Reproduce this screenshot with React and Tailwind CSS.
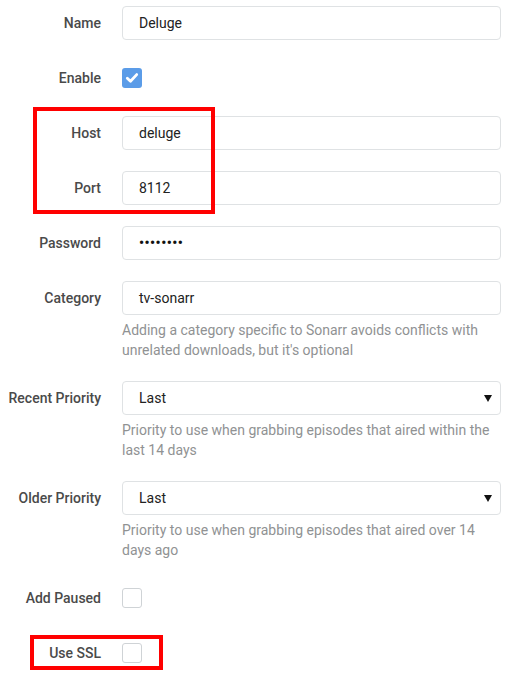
import React from 'react'

const Label = ({ children }) => (
  <div className="h-[34px] flex items-center justify-end text-[14px] font-medium text-[#4a4a4a] whitespace-nowrap">
    {children}
  </div>
)

const TextInput = ({ value, select, secret }) => (
  <div className="relative h-[34px] flex items-center border border-[#dfe2e4] rounded-[4px] bg-white pl-4 pr-3 text-[14px] text-[#222]">
    <span className={secret ? 'font-bold text-[#111] tracking-[0.5px]' : ''}>{value}</span>
    {select && (
      <svg className="absolute right-[8px] top-[13px]" width="8" height="7" viewBox="0 0 8 7">
        <path d="M0 0 H8 L4 7 Z" fill="#111" />
      </svg>
    )}
  </div>
)

const Check = ({ checked }) =>
  checked ? (
    <div className="w-[20px] h-[20px] rounded-[3px] bg-[#5b9ce8] flex items-center justify-center">
      <svg width="14" height="14" viewBox="0 0 14 14">
        <path d="M2.3 7.2 L5.5 10.3 L11.7 3.6" fill="none" stroke="#fff" strokeWidth="2.8" strokeLinecap="round" strokeLinejoin="round" />
      </svg>
    </div>
  ) : (
    <div className="w-[20px] h-[20px] rounded-[3px] border border-[#cfd3d6] bg-white" />
  )

const Help = ({ children }) => (
  <p className="mt-[5px] text-[14px] leading-[20px] text-[#909293]">{children}</p>
)

const App = () => {
  const rows = [
    { label: 'Name', field: <TextInput value="Deluge" /> },
    { label: 'Enable', field: <div className="h-[34px] flex items-center"><Check checked /></div> },
    { label: 'Host', field: <TextInput value="deluge" /> },
    { label: 'Port', field: <TextInput value="8112" /> },
    { label: 'Password', field: <TextInput value="••••••••" secret /> },
    {
      label: 'Category',
      field: <TextInput value="tv-sonarr" />,
      help: "Adding a category specific to Sonarr avoids conflicts with unrelated downloads, but it's optional",
    },
    {
      label: 'Recent Priority',
      field: <TextInput value="Last" select />,
      help: 'Priority to use when grabbing episodes that aired within the last 14 days',
    },
    {
      label: 'Older Priority',
      field: <TextInput value="Last" select />,
      help: 'Priority to use when grabbing episodes that aired over 14 days ago',
    },
    { label: 'Add Paused', field: <div className="h-[34px] flex items-center"><Check /></div> },
    { label: 'Use SSL', field: <div className="h-[34px] flex items-center"><Check /></div> },
  ]

  return (
    <div className="relative w-[514px] h-[675px] overflow-hidden bg-white pt-[6px] pr-[13px] font-['Roboto',sans-serif]">
      <div className="flex flex-col gap-[21px]">
        {rows.map((row) => (
          <div key={row.label} className="grid grid-cols-[101px_1fr] gap-x-[21px]">
            <Label>{row.label}</Label>
            <div>
              {row.field}
              {row.help && <Help>{row.help}</Help>}
            </div>
          </div>
        ))}
      </div>

      {/* annotation boxes */}
      <div className="absolute left-[33px] top-[107px] w-[182px] h-[107px] border-[4px] border-[#ff0000]" />
      <div className="absolute left-[30px] top-[635px] w-[133px] h-[35px] border-[4px] border-[#ff0000]" />
    </div>
  )
}

export default App
